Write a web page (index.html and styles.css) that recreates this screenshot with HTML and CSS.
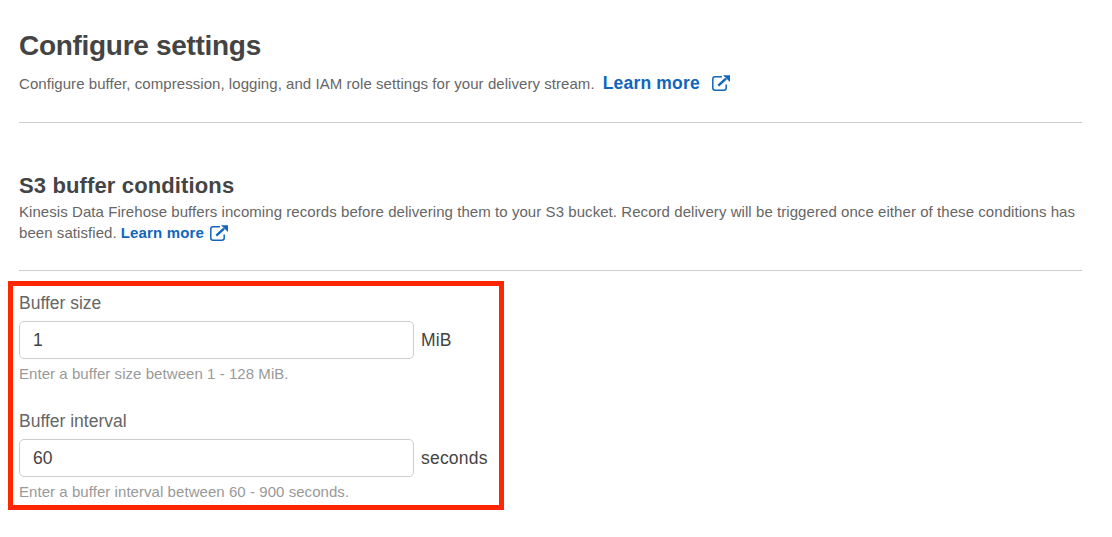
FILE: index.html
```html
<!DOCTYPE html>
<html lang="en">
<head>
<meta charset="utf-8">
<title>Configure settings</title>
<link rel="stylesheet" href="styles.css">
</head>
<body>
<main class="page">
  <header class="intro">
    <h1 class="title"><span>Configure settings</span></h1>
    <p class="lead"><span class="lead-text">Configure buffer, compression, logging, and IAM role settings for your delivery stream.</span><a class="link link-large"><span class="link-label">Learn more</span><svg class="ext" viewBox="0 0 18 16"><path class="ext-box" d="M10 1.800H3Q.8 1.800 .8 4V13Q.8 15.200 3 15.200H12Q14.200 15.200 14.200 13V9.500" /><path class="ext-stem" d="M6.300 10.700L14 3.700" /><path class="ext-head" d="M11 .2H18V7Z" /></svg></a></p>
  </header>
  <section class="conditions">
    <h2 class="subtitle"><span>S3 buffer conditions</span></h2>
    <p class="desc"><span class="desc-one">Kinesis Data Firehose buffers incoming records before delivering them to your S3 bucket. Record delivery will be triggered once either of these conditions has</span><br><span class="desc-two">been satisfied.</span><a class="link"><span class="link-label">Learn more</span><svg class="ext" viewBox="0 0 18 16"><path class="ext-box" d="M10 1.800H3Q.8 1.800 .8 4V13Q.8 15.200 3 15.200H12Q14.200 15.200 14.200 13V9.500" /><path class="ext-stem" d="M6.300 10.700L14 3.700" /><path class="ext-head" d="M11 .2H18V7Z" /></svg></a></p>
  </section>
  <form class="fields">
    <div class="field">
      <label class="label" for="size">Buffer size</label>
      <div class="row"><input class="input" id="size" value="1"><span class="unit">MiB</span></div>
      <p class="hint"><span>Enter a buffer size between 1 - 128 MiB.</span></p>
    </div>
    <div class="field">
      <label class="label" for="interval">Buffer interval</label>
      <div class="row"><input class="input" id="interval" value="60"><span class="unit">seconds</span></div>
      <p class="hint"><span>Enter a buffer interval between 60 - 900 seconds.</span></p>
    </div>
  </form>
</main>
</body>
</html>
```

FILE: styles.css
```css
* { box-sizing: border-box; }
body { margin: 0; background: #fff; color: #444; font-family: "Liberation Sans", Arial, sans-serif; }
h1, h2, p { margin: 0; }
.page { width: 1112px; height: 537px; overflow: hidden; }
.intro { margin: 0 30px 0 19px; height: 123px; padding-top: 30px; border-bottom: 1px solid #ccc; }
.title { font-size: 28px; line-height: 32px; letter-spacing: -0.3px; }
.lead { display: flex; height: 24px; margin-top: 9px; align-items: center; font-size: 15px; letter-spacing: 0.055px; color: #666; white-space: nowrap; }
.link { color: #1166bb; font-weight: bold; display: inline-flex; align-items: center; letter-spacing: 0.17px; }
.link-large { font-size: 17.5px; margin-left: 8px; letter-spacing: 0.2px; }
.ext { width: 18px; height: 16px; margin-left: 6px; fill: none; stroke: #1166bb; }
.ext-box { stroke-width: 1.5; }
.ext-stem { stroke-width: 2.4; }
.ext-head { fill: #1166bb; stroke: none; }
.link-large .ext { margin-left: 12px; }
.conditions { margin: 0 30px 0 19px; height: 148px; padding-top: 49px; border-bottom: 1px solid #ccc; }
.subtitle { font-size: 22px; line-height: 28px; letter-spacing: 0.13px; }
.desc { font-size: 15px; line-height: 21px; letter-spacing: 0.063px; color: #666; white-space: nowrap; margin-top: 1px; }
.desc .link { margin-left: 4px; }
.fields { width: 496px; height: 229px; margin: 10px 0 0 8px; border: 5px solid #ff2600; padding: 6px 6px 0; }
.field { height: 118px; }
.label { display: block; font-size: 17.5px; line-height: 22px; color: #666; }
.row { display: flex; align-items: center; gap: 7px; margin-top: 7px; }
.input { width: 395px; height: 38px; border: 1px solid #ccc; border-radius: 5px; padding: 0 13px; font: 17.5px "Liberation Sans", Arial, sans-serif; color: #444; }
.unit { font-size: 17.5px; letter-spacing: 0.2px; color: #444; }
.hint { font-size: 15px; line-height: 20px; letter-spacing: 0.055px; color: #999; margin-top: 5px; white-space: nowrap; }
```
